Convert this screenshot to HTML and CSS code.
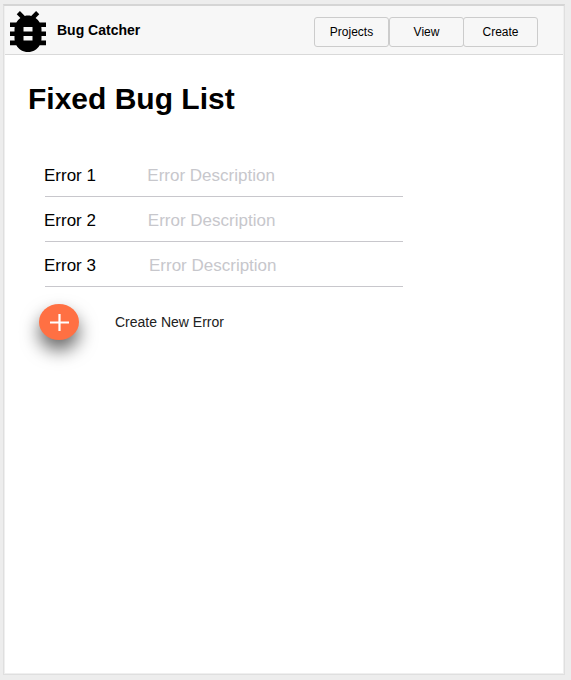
FILE: index.html
```html
<!DOCTYPE html>
<html lang="en">
<head>
<meta charset="utf-8">
<title>Bug Catcher</title>
<link rel="stylesheet" href="styles.css">
</head>
<body>
<div class="window">
  <header class="bar">
    <svg class="logo" viewBox="4 3 16 18" preserveAspectRatio="none" aria-hidden="true"><path d="M20 8h-2.81c-.45-.78-1.07-1.45-1.82-1.96L17 4.41 15.59 3l-2.17 2.17C12.96 5.06 12.49 5 12 5c-.49 0-.96.06-1.41.17L8.41 3 7 4.41l1.62 1.63C7.88 6.55 7.26 7.22 6.81 8H4v2h2.09c-.05.33-.09.66-.09 1v1H4v2h2v1c0 .34.04.67.09 1H4v2h2.81c1.04 1.79 2.97 3 5.19 3s4.15-1.21 5.19-3H20v-2h-2.09c.05-.33.09-.66.09-1v-1h2v-2h-2v-1c0-.34-.04-.67-.09-1H20V8zm-6 8h-4v-2h4v2zm0-4h-4v-2h4v2z"/></svg>
    <span class="brand">Bug Catcher</span>
    <nav class="nav">
      <button class="tab">Projects</button>
      <button class="tab">View</button>
      <button class="tab tab-joined">Create</button>
    </nav>
  </header>
  <main class="content">
    <h1 class="title">Fixed Bug List</h1>
    <ul class="list">
      <li class="row"><span class="name">Error 1</span><span class="desc">Error Description</span></li>
      <li class="row"><span class="name">Error 2</span><span class="desc">Error Description</span></li>
      <li class="row row-last"><span class="name">Error 3</span><span class="desc">Error Description</span></li>
    </ul>
    <div class="create">
      <button class="add" aria-label="Create New Error">
        <svg class="plus" viewBox="0 0 19 17" aria-hidden="true"><path d="M0 8.5h19M9.5 0v17"/></svg>
      </button>
      <span class="create-label">Create New Error</span>
    </div>
  </main>
</div>
</body>
</html>
```
FILE: styles.css
```css
* { box-sizing: border-box; }
body {
  margin: 0;
  height: 680px;
  padding: 4px 6px 5px 3px;
  background: #ededed;
  font-family: "Liberation Sans", Arial, sans-serif;
  color: #000;
}
.window {
  height: 671px;
  background: #fff;
  border: 1px solid #dfdfdf;
  border-top: 2px solid #d5d5d5;
  box-shadow: inset 1px 0 #efefef, inset -1px -1px #efefef;
}
.bar {
  display: flex;
  align-items: flex-start;
  height: 49px;
  margin: 0 1px;
  padding: 5px 24px 0 5px;
  background: #f7f7f7;
  border-bottom: 1px solid #d9d9d9;
}
.logo { width: 36px; height: 41px; }
.brand {
  margin: 11px 0 0 11px;
  font-size: 14px;
  font-weight: bold;
  line-height: 16px;
}
.nav { display: flex; margin: 6px 1px 0 auto; }
.tab {
  width: 75px;
  height: 30px;
  padding: 0;
  border: 1px solid #ccc;
  border-radius: 3px;
  background: #f7f7f7;
  color: #000;
  font: 12px "Liberation Sans", Arial, sans-serif;
}
.tab-joined { margin-left: -1px; }
.content { padding: 24px 0 0 24px; }
.title {
  margin: 0;
  font-size: 30px;
  line-height: 40px;
}
.list {
  width: 358px;
  margin: 33px 0 0 17px;
  padding: 0;
  list-style: none;
}
.row {
  display: flex;
  height: 45px;
  padding-top: 14px;
  border-bottom: 1px solid #c8c7cc;
  font-size: 17px;
  line-height: 20px;
}
.name { width: 103.8px; margin-left: -1px; }
.desc { color: #c7c7cc; }
.row:first-child .name { width: 103.3px; }
.row-last .name { width: 105px; }
.create { display: flex; margin: 17px 0 0 11px; }
.add {
  display: grid;
  place-items: center;
  width: 40px;
  height: 36px;
  padding: 0;
  border: 0;
  border-radius: 50%;
  background: #ff7043;
  box-shadow: 0 10px 18px rgba(0, 0, 0, .6);
}
.plus { width: 19px; height: 17px; fill: none; stroke: #fff; stroke-width: 2.2; }
.create-label {
  margin: 10px 0 0 36px;
  color: #212121;
  font-size: 14px;
  line-height: 16px;
}
```
